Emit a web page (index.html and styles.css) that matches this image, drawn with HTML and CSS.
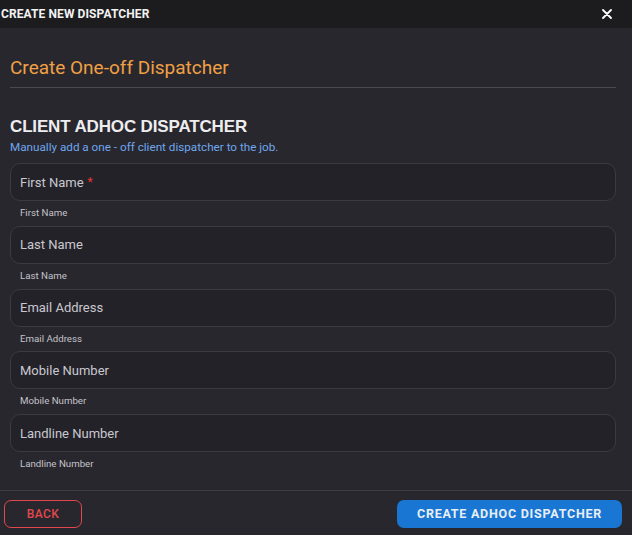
FILE: index.html
```html
<!DOCTYPE html>
<html lang="en">
<head>
  <meta charset="UTF-8">
  <meta name="viewport" content="width=device-width, initial-scale=1.0">
  <title>Create New Dispatcher</title>
  <link rel="stylesheet" href="styles.css">
</head>
<body>
  <div class="dialog">
    <header class="dialog-header">
      <span class="dialog-title">CREATE NEW DISPATCHER</span>
      <button class="close-btn" aria-label="Close">
        <svg width="10" height="10" viewBox="0 0 10 10"><path d="M1 1L9 9M9 1L1 9" stroke="#fff" stroke-width="1.8" stroke-linecap="round"/></svg>
      </button>
    </header>

    <div class="dialog-body">
      <h2 class="section-title">Create One-off Dispatcher</h2>

      <h3 class="form-heading">CLIENT ADHOC DISPATCHER</h3>
      <p class="form-sub">Manually add a one - off client dispatcher to the job.</p>

      <form class="form">
        <div class="field">
          <div class="input">First Name <span class="req">*</span></div>
          <div class="helper">First Name</div>
        </div>
        <div class="field">
          <div class="input">Last Name</div>
          <div class="helper">Last Name</div>
        </div>
        <div class="field">
          <div class="input">Email Address</div>
          <div class="helper">Email Address</div>
        </div>
        <div class="field">
          <div class="input">Mobile Number</div>
          <div class="helper">Mobile Number</div>
        </div>
        <div class="field">
          <div class="input">Landline Number</div>
          <div class="helper">Landline Number</div>
        </div>
      </form>
    </div>

    <footer class="dialog-footer">
      <button class="btn btn-back">BACK</button>
      <button class="btn btn-create">CREATE ADHOC DISPATCHER</button>
    </footer>
  </div>
</body>
</html>
```

FILE: styles.css
```css
body {
  margin: 0;
  background: #28272d;
  font-family: Roboto, "Liberation Sans", sans-serif;
  color: #e6e6ea;
}

.dialog {
  width: 632px;
  height: 535px;
  display: flex;
  flex-direction: column;
  background: #28272d;
}

/* Header */
.dialog-header {
  height: 28px;
  display: flex;
  align-items: center;
  justify-content: space-between;
  background: #1c1c1f;
  padding: 0 20px 0 1px;
}

.dialog-title {
  font-size: 12px;
  font-weight: 700;
  color: #f2f2f2;
  letter-spacing: 0.1px;
}

.close-btn {
  background: none;
  border: none;
  padding: 0;
  display: flex;
  cursor: pointer;
}

/* Body */
.dialog-body {
  flex: 1;
  padding: 0 16px 0 10px;
}

.section-title {
  margin: 28px 0 0;
  padding-bottom: 8px;
  font-size: 19px;
  font-weight: 400;
  color: #f0a045;
  border-bottom: 1px solid #4a4950;
}

.form-heading {
  margin: 29px 0 0;
  font-family: "Liberation Sans", Arial, sans-serif;
  font-size: 17px;
  font-weight: 700;
  letter-spacing: -0.15px;
  color: #ededf0;
  line-height: 20px;
}

.form-sub {
  margin: 3px 0 0;
  font-size: 11.7px;
  color: #6fa6ee;
  line-height: 15px;
}

.form {
  margin-top: 8px;
  display: flex;
  flex-direction: column;
}

.field {
  height: 62.75px;
}

.input {
  height: 36px;
  display: flex;
  align-items: center;
  padding: 0 9px;
  border: 1px solid #3b3a42;
  border-radius: 10px;
  background: #232228;
  font-size: 13px;
  color: #c9c8d0;
}

.req {
  color: #e53935;
  margin-left: 4px;
  font-size: 12px;
}

.helper {
  padding: 6px 0 0 10px;
  font-size: 9.7px;
  color: #c4c3cb;
}

/* Footer */
.dialog-footer {
  height: 43px;
  display: flex;
  align-items: center;
  justify-content: space-between;
  padding: 1px 10px 0 4px;
  border-top: 1px solid #3d3c44;
}

.btn {
  height: 28px;
  border-radius: 7px;
  font-family: Roboto, "Liberation Sans", sans-serif;
  font-size: 12px;
  font-weight: 500;
  letter-spacing: 0.4px;
  cursor: pointer;
}

.btn-back {
  width: 78px;
  background: transparent;
  border: 1px solid #e0484d;
  color: #e0484d;
}

.btn-create {
  width: 225px;
  background: #1976d2;
  border: none;
  color: #e8eef6;
  font-size: 12.5px;
  font-weight: 700;
  letter-spacing: 0.75px;
}
```
